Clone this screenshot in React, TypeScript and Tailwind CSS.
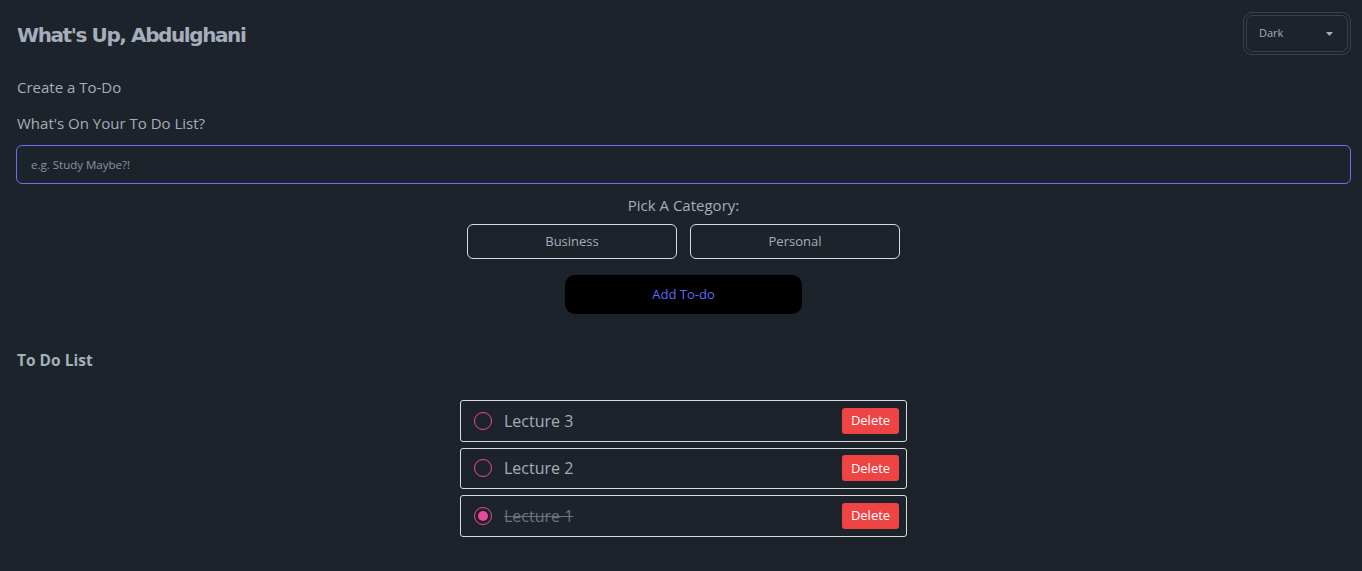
import React from "react";

const items = [
  { text: "Lecture 3", done: false },
  { text: "Lecture 2", done: false },
  { text: "Lecture 1", done: true },
];

export default function App() {
  return (
    <div
      className="min-h-[571px] bg-[#1d232a] text-[#a6adbb] pl-4 pr-[11px]"
      style={{ fontFamily: '"Open Sans", "Noto Sans", sans-serif' }}
    >
      <header className="flex items-start justify-between pt-[12px]">
        <h1
          className="mt-[10px] ml-px text-[20px] font-bold leading-[26px] tracking-[-1.4px] text-[#a6adbb]"
          style={{ fontFamily: '"DejaVu Sans", Verdana, sans-serif' }}
        >
          What's Up, Abdulghani
        </h1>
        <div className="h-[43px] w-[108px] rounded-[9px] border border-[#3a414b] p-[2px]">
          <div className="flex h-full items-center justify-between rounded-[7px] border border-[#3a414b] pl-[12px] pr-[14px] text-[11px] text-[#a6adbb]">
            <span>Dark</span>
            <svg width="7" height="4" viewBox="0 0 7 4">
              <path d="M0 0 L7 0 L3.5 4 Z" fill="#a6adbb" />
            </svg>
          </div>
        </div>
      </header>

      <p className="mt-[21px] ml-px text-[15px] leading-[22px]">Create a To-Do</p>
      <p className="mt-[14px] ml-px text-[15px] leading-[22px]">What's On Your To Do List?</p>

      <div className="mt-[11px] flex h-[39px] items-center rounded-[6px] border border-[#6c70f0] pl-[14px] text-[11.5px] text-[#8b93a0]">
        e.g. Study Maybe?!
      </div>

      <p className="mt-[10px] text-center text-[15px] leading-[22px]">Pick A Category:</p>
      <div className="mt-[8px] flex justify-center gap-[13px]">
        <div className="flex h-[35px] w-[210px] items-center justify-center rounded-[6px] border border-[#d8dbe0] text-[13px]">
          Business
        </div>
        <div className="flex h-[35px] w-[210px] items-center justify-center rounded-[6px] border border-[#d8dbe0] text-[13px]">
          Personal
        </div>
      </div>

      <div className="mt-[16px] flex justify-center">
        <div className="flex h-[39px] w-[237px] items-center justify-center rounded-[10px] bg-black pt-px text-[13px] text-[#6168f6]">
          Add To-do
        </div>
      </div>

      <h2 className="mt-[34px] ml-px text-[15.5px] font-bold leading-[24px]">To Do List</h2>

      <ul className="mt-[28px] flex flex-col items-center gap-[6px] pb-[34px]">
        {items.map((it) => (
          <li
            key={it.text}
            className="flex h-[41.5px] w-[447px] items-center rounded-[3px] border border-[#d8dbe0] pl-[13px] pr-[7px]"
          >
            <span className="flex h-[18px] w-[18px] items-center justify-center rounded-full border-[1.5px] border-[#ec4899]">
              {it.done && <span className="h-[10px] w-[10px] rounded-full bg-[#ec4899]" />}
            </span>
            <span
              className={
                "ml-[12px] flex-1 text-[16px] " +
                (it.done ? "line-through text-[#6b7280]" : "text-[#a6adbb]")
              }
            >
              {it.text}
            </span>
            <span className="flex h-[26px] w-[57px] items-center justify-center rounded-[3px] bg-[#ef4444] text-[13px] text-white">
              Delete
            </span>
          </li>
        ))}
      </ul>
    </div>
  );
}
